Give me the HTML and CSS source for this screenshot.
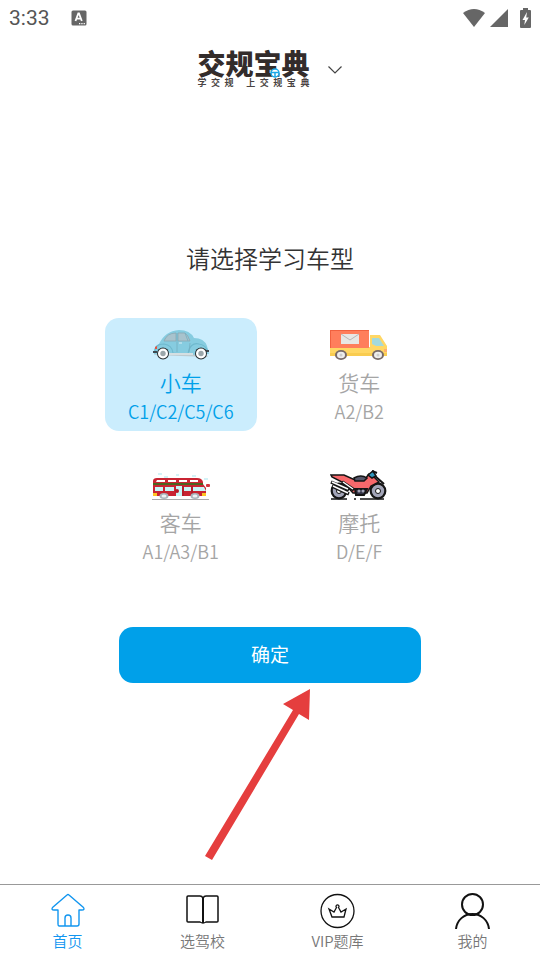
FILE: index.html
```html
<!DOCTYPE html>
<html lang="zh-CN">
<head>
  <meta charset="UTF-8" />
  <meta name="viewport" content="width=device-width, initial-scale=1.0"/>
  <title>交规宝典</title>
  <link rel="stylesheet" href="styles.css">
</head>
<body>
  <div class="status-bar">
    <span class="time">3:33</span>
    <svg class="input-icon" width="16" height="16" viewBox="0 0 16 16">
      <rect x="0.5" y="0.5" width="15" height="15" rx="1.5" fill="#666"/>
      <path d="M4.5 11L7.3 3.5H8L10.8 11M5.6 8.6H9.7" fill="none" stroke="#fff" stroke-width="1.8"/>
      <path d="M8 13.6H14" stroke="#fff" stroke-width="1.3" stroke-dasharray="1.3 1"/>
    </svg>
    <div class="status-icons">
      <svg width="24" height="20" viewBox="0 0 24 20"><path d="M1 5Q12-3 23 5L12 19Z" fill="#666"/></svg>
      <svg width="18" height="20" viewBox="0 0 18 20"><path d="M18 1V19H0Z" fill="#666"/></svg>
      <svg class="battery" width="11" height="20" viewBox="0 0 11 20">
        <path d="M3 0H8V2H10Q11 2 11 3V19Q11 20 10 20H1Q0 20 0 19V3Q0 2 1 2H3Z" fill="#666"/>
        <path d="M7 4L2.5 12H5L4.3 17L8.8 9.5H6.2Z" fill="#fff"/>
      </svg>
    </div>
  </div>

  <header class="header">
    <div class="logo">
      <h1>交规宝典</h1>
      <svg class="wheel" width="10" height="10" viewBox="0 0 10 10">
        <circle cx="5" cy="5" r="4" fill="#fff" stroke="#1ba9e8" stroke-width="1.5"/>
        <path d="M1 4.5H9M5 5V9" stroke="#1ba9e8" stroke-width="1.5"/>
      </svg>
      <p class="slogan">
        <span>学</span><span>交</span><span>规</span>
        <span class="slogan-break">上</span><span>交</span><span>规</span><span>宝</span><span>典</span>
      </p>
    </div>
    <button class="switch" type="button" aria-label="切换">
      <svg width="16" height="10" viewBox="0 0 16 10"><path d="M1.5 1.5L8 8L14.5 1.5" fill="none" stroke="#444" stroke-width="1.2"/></svg>
    </button>
  </header>

  <main class="main">
    <h2>请选择学习车型</h2>
    <form>
      <div class="car-list">
        <label class="car">
          <input type="radio" name="car" value="car" checked>
          <svg width="58" height="30" viewBox="0 0 58 30">
            <path d="M2 25L56 27L52 22H4Z" fill="#bdcbd0"/>
            <path d="M2 24Q1 17 7 14Q13 1 27 0Q38 0 42 8Q52 8 55 16L57 24L37 25H15Z" fill="#86cce0"/>
            <path d="M3 23Q2 14 12 14Q20 15 21 23L36 24Q38 12 47 14Q54 15 56 22" fill="none" stroke="#6fb9ce" stroke-width="1.2"/>
            <path d="M12 11Q15 3 24 3V11ZM26 3H33Q36 5 38 11H26Z" fill="#a8c3cd" stroke="#8aa7b1" stroke-width="0.8"/>
            <path d="M33 3L36 11M25 3V22M38 13L37 22" fill="none" stroke="#74afc0" stroke-width="0.8"/>
            <path d="M27 13H30" stroke="#dceef4"/>
            <path d="M1 22H5M53 21H57" stroke="#404950" stroke-width="2"/>
            <path d="M3 17L5 16V19H3Z" fill="#e6533f"/>
            <path d="M17 24H41" stroke="#d5dfe2" stroke-width="2"/>
            <circle cx="11" cy="23.5" r="6" fill="#292f32"/><circle cx="49" cy="23.5" r="6" fill="#292f32"/>
            <circle cx="11" cy="23.5" r="5" fill="#fff"/><circle cx="49" cy="23.5" r="5" fill="#fff"/>
            <circle cx="11" cy="23.5" r="2.7" fill="#9ba6aa"/><circle cx="49" cy="23.5" r="2.7" fill="#9ba6aa"/>
          </svg>
          <span class="name">小车</span>
          <span class="code">C1/C2/C5/C6</span>
        </label>
        <label class="car">
          <input type="radio" name="car" value="truck">
          <svg width="58" height="30" viewBox="0 0 58 30">
            <path d="M0 17H40V5H50L57 16V26H0Z" fill="#ffd764"/>
            <path d="M0 23H57V26H0Z" fill="#f9cc50"/>
            <path d="M0 0H39V18H0Z" fill="#ff7e5c"/>
            <path d="M0 0H39V1H1V18H0Z" fill="#f1613f"/>
            <path d="M11 4H29V14H11Z" fill="#e8e7e5"/>
            <path d="M11 4L20 10L29 4" fill="none" stroke="#b8b6b5" stroke-width="1"/>
            <path d="M42 8H49L54 16H46L42 14Z" fill="#a3d9dc"/>
            <path d="M54 19H57V22H54Z" fill="#ffb070"/>
            <ellipse cx="11" cy="25" rx="6" ry="5" fill="#786a68"/><ellipse cx="48" cy="25" rx="6" ry="5" fill="#786a68"/>
            <ellipse cx="11" cy="25" rx="4" ry="3.2" fill="#eee"/><ellipse cx="48" cy="25" rx="4" ry="3.2" fill="#eee"/>
            <circle cx="11" cy="25" r="1.5" fill="#ccc"/><circle cx="48" cy="25" r="1.5" fill="#ccc"/>
          </svg>
          <span class="name">货车</span>
          <span class="code">A2/B2</span>
        </label>
        <label class="car">
          <input type="radio" name="car" value="bus">
          <svg width="58" height="30" viewBox="0 0 58 30">
            <path d="M6 4H10M24 5H27M40 6H44M12 7H16M52 9H56" stroke="#a8e6ed" stroke-width="1.2"/>
            <path d="M1 11Q1 8 5 8H45Q50 8 51 12V14L54 18V26H1Z" fill="#c92432"/>
            <path d="M5 10H13V12H4ZM16 10H24V12H16ZM27 10H35V12H27ZM38 10H46V12H38Z" fill="#fff"/>
            <path d="M1 13H51V15H1Z" fill="#4c641f"/>
            <path d="M3 17H11V21H3ZM13 17H22V21H13ZM24 16H30V26H24ZM32 17H39V21H32ZM41 17H52L54 21H41Z" fill="#c8f6f7"/>
            <path d="M31 16V26M40 16V26" stroke="#9e1824"/>
            <circle cx="25" cy="21" r="2" fill="#b71926"/>
            <rect x="54" y="14" width="4" height="3" rx="1" fill="#d23640"/>
            <path d="M1 23H5V26H1ZM50 23H54V26H50Z" fill="#ffc424"/>
            <path d="M0 29.5H57" stroke="#aaa"/>
            <ellipse cx="12" cy="26" rx="4.5" ry="3" fill="#a9b4bb"/><ellipse cx="43" cy="26" rx="4.5" ry="3" fill="#a9b4bb"/>
            <ellipse cx="12" cy="26" rx="2.5" ry="1.6" fill="#edf1f2"/><ellipse cx="43" cy="26" rx="2.5" ry="1.6" fill="#edf1f2"/>
          </svg>
          <span class="name">客车</span>
          <span class="code">A1/A3/B1</span>
        </label>
        <label class="car">
          <input type="radio" name="car" value="moto">
          <svg width="58" height="30" viewBox="0 0 58 30">
            <circle cx="9" cy="21" r="7.3" fill="#a3a5b8" stroke="#151515" stroke-width="2.2"/>
            <circle cx="48" cy="21" r="7.3" fill="#a3a5b8" stroke="#151515" stroke-width="2.2"/>
            <circle cx="9" cy="21" r="2.5" fill="#fff" stroke="#151515"/><circle cx="48" cy="21" r="2.5" fill="#fff" stroke="#151515"/>
            <path d="M1 5H14L25 10L35 9L39 4L45 8L49 12L41 16L37 23H23L14 13L2 7Z" fill="#f8686b" stroke="#151515" stroke-width="1.5"/>
            <path d="M24 8Q31 4 37 8L34 11H25Z" fill="#56576a" stroke="#151515" stroke-width="1.5"/>
            <path d="M38 5L43 1L46 6L42 8Z" fill="#3297bd" stroke="#151515" stroke-width="1.5"/>
            <path d="M42 1L47 3M45 6L54 14" fill="none" stroke="#151515" stroke-width="2"/>
            <path d="M1 12L19 20M2 16L19 24M12 12L24 20" stroke="#151515" stroke-width="3.5"/>
            <path d="M2 12L18 19M3 16L18 23M13 12L23 19" stroke="#fff" stroke-width="1.5"/>
            <path d="M25 19H37L34 25H26Z" fill="#343447" stroke="#151515" stroke-width="2"/>
            <circle cx="29" cy="21" r="1.5" fill="#a3a5b8"/><circle cx="33" cy="21" r="1.5" fill="#a3a5b8"/>
            <path d="M1 29H17M24 29H26M30 29H54" stroke="#151515" stroke-width="1.5"/>
          </svg>
          <span class="name">摩托</span>
          <span class="code">D/E/F</span>
        </label>
      </div>
      <div class="confirm">
        <button class="confirm-btn" type="button">确定</button>
        <svg class="arrow" width="106" height="172" viewBox="0 0 106 172">
          <path d="M105 0L78 15L88 21L0 167L7 171L94 25L104 31Z" fill="#e53e3e"/>
        </svg>
      </div>
    </form>
  </main>

  <nav class="tab-bar">
    <a class="tab active" href="#">
      <svg width="36" height="36" viewBox="0 0 36 36" fill="none" stroke="currentColor" stroke-width="1.4" stroke-linejoin="round">
        <path d="M17 2Q18 1 19 2L33.5 14.5Q35 17 32 17H29V31Q29 33 27 33H9Q8 33 8 31V17H4Q1 17 2.5 14.5Z"/>
        <path d="M15 33V25Q15 22 18 22Q21 22 21 25V33"/>
      </svg>
      <span>首页</span>
    </a>
    <a class="tab" href="#">
      <svg width="36" height="36" viewBox="0 0 36 36" fill="none" stroke="#111" stroke-width="1.5" stroke-linejoin="round">
        <path d="M18 5Q17 3 15 3H3Q2 3 2 4V28Q2 29 3 29H15Q18 31 21 29H32Q33 29 33 28V4Q33 3 32 3H21Q19 3 18 5Z"/>
        <path d="M18 5V30" stroke-width="2"/>
      </svg>
      <span>选驾校</span>
    </a>
    <a class="tab" href="#">
      <svg width="36" height="36" viewBox="0 0 36 36" fill="none" stroke="#111" stroke-width="1.3">
        <circle cx="17.5" cy="18" r="16.5"/>
        <path d="M9 16L14 19L16.5 14.5A1.5 1.5 0 1 1 18.5 14.5L21 19L26 16L24 24H12Z"/>
      </svg>
      <span>VIP题库</span>
    </a>
    <a class="tab" href="#">
      <svg width="36" height="36" viewBox="0 0 36 36" fill="none" stroke="#111" stroke-width="2">
        <circle cx="17.5" cy="11.5" r="10.5"/>
        <path d="M1 36C2 27 9 21 17.5 21S33 27 34 36"/>
      </svg>
      <span>我的</span>
    </a>
  </nav>
</body>
</html>
```
FILE: styles.css
```css
* {
  box-sizing: border-box;
}
body {
  font-family: "Noto Sans CJK SC", sans-serif;
  font-weight: 350;
  background-color: #fff;
  color: #333;
  display: flex;
  flex-direction: column;
  min-height: 100vh;
  margin: 0;
}
svg {
  display: block;
}
h1, h2, p {
  margin: 0;
}
button {
  border: none;
  font-family: inherit;
  cursor: pointer;
}

.status-bar {
  display: flex;
  align-items: center;
  height: 36px;
  padding: 0 9px;
}
.time {
  font-family: Roboto, sans-serif;
  font-size: 21px;
  font-weight: 400;
  color: #555;
}
.input-icon {
  margin-left: 21px;
}
.status-icons {
  display: flex;
  gap: 4px;
  margin-left: auto;
}
.battery {
  margin-left: 8px;
}

.header {
  display: flex;
  justify-content: center;
  align-items: center;
  gap: 17px;
  height: 68px;
}
.logo {
  position: relative;
}
.logo h1 {
  font-size: 28px;
  font-weight: 900;
  line-height: 26px;
  color: #332c2b;
}
.wheel {
  position: absolute;
  top: 18px;
  left: 73px;
}
.slogan {
  display: flex;
  justify-content: space-between;
  font-size: 9px;
  font-weight: 700;
  line-height: 14px;
  color: #4a4443;
}
.slogan-break {
  margin-left: 8px;
}
.switch {
  padding: 0;
  background: none;
}

.main {
  flex: 1;
  padding: 137px 105px 0;
}
h2 {
  font-size: 24px;
  font-weight: 350;
  line-height: 34px;
  text-align: center;
}
.car-list {
  display: grid;
  grid-template-columns: 1fr 1fr;
  gap: 27px;
  margin-top: 43px;
}
.car {
  position: relative;
  display: flex;
  flex-direction: column;
  align-items: center;
  padding: 12px 0 6px;
  border-radius: 14px;
  color: #a5a5a5;
  cursor: pointer;
}
.car:has(input:checked) {
  background-color: #cbedfd;
  color: #00a0e9;
}
.car input {
  position: absolute;
  inset: 0;
  margin: 0;
  appearance: none;
  cursor: pointer;
}
.name {
  margin-top: 8px;
  font-size: 21px;
  line-height: 28px;
}
.code {
  margin-top: 1px;
  font-size: 18px;
  line-height: 28px;
}

.confirm {
  position: relative;
  margin: 56px 14px 0;
}
.confirm-btn {
  display: block;
  width: 100%;
  height: 56px;
  padding: 0 0 4px;
  border-radius: 14px;
  background-color: #00a0e9;
  color: #fff;
  font-size: 19px;
}
.arrow {
  position: absolute;
  top: 62px;
  left: 86px;
}

.tab-bar {
  display: flex;
  height: 76px;
  border-top: 1px solid #999;
}
.tab {
  flex: 1;
  display: flex;
  flex-direction: column;
  align-items: center;
  padding-top: 8px;
  color: #777;
  font-size: 15px;
  line-height: 24px;
  text-decoration: none;
}
.tab.active {
  color: #1296f0;
}
```
